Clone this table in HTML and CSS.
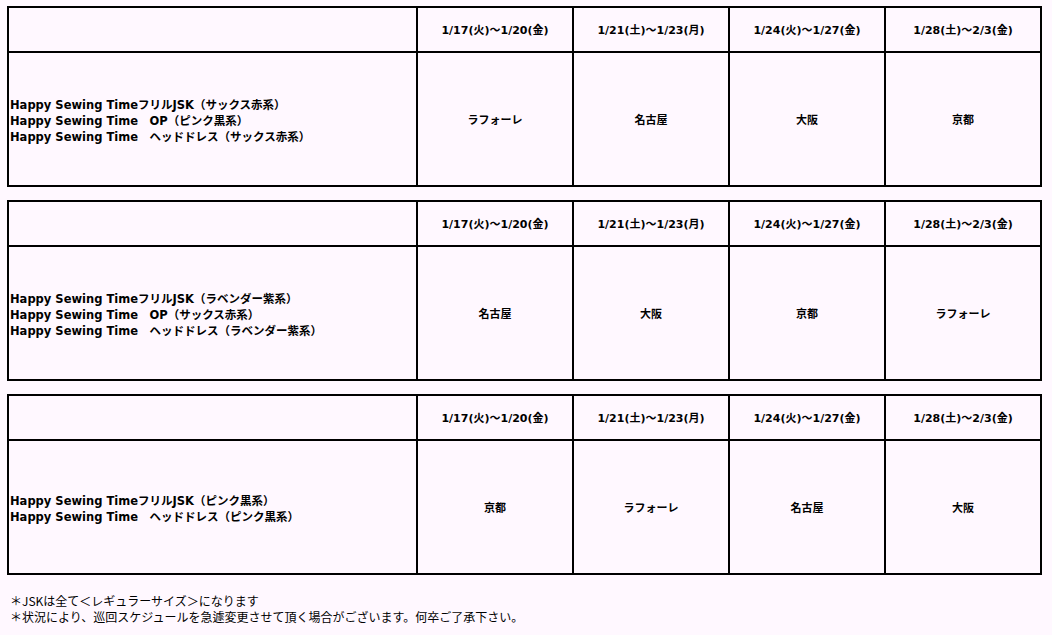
FILE: index.html
```html
<!DOCTYPE html>
<html lang="ja">
<head>
<meta charset="utf-8">
<title>巡回スケジュール</title>
<link rel="stylesheet" href="styles.css">
</head>
<body>
<div class="page">
  <table class="sched">
    <colgroup><col class="c-name"><col class="c-date"><col class="c-date"><col class="c-date"><col class="c-date"></colgroup>
    <tr class="head"><td></td><td>1/17(火)～1/20(金)</td><td>1/21(土)～1/23(月)</td><td>1/24(火)～1/27(金)</td><td>1/28(土)～2/3(金)</td></tr>
    <tr class="body">
      <td class="name">Happy Sewing TimeフリルJSK（サックス赤系）<br>Happy Sewing Time　OP（ピンク黒系）<br>Happy Sewing Time　ヘッドドレス（サックス赤系）</td>
      <td>ラフォーレ</td><td>名古屋</td><td>大阪</td><td>京都</td>
    </tr>
  </table>
  <table class="sched">
    <colgroup><col class="c-name"><col class="c-date"><col class="c-date"><col class="c-date"><col class="c-date"></colgroup>
    <tr class="head"><td></td><td>1/17(火)～1/20(金)</td><td>1/21(土)～1/23(月)</td><td>1/24(火)～1/27(金)</td><td>1/28(土)～2/3(金)</td></tr>
    <tr class="body">
      <td class="name">Happy Sewing TimeフリルJSK（ラベンダー紫系）<br>Happy Sewing Time　OP（サックス赤系）<br>Happy Sewing Time　ヘッドドレス（ラベンダー紫系）</td>
      <td>名古屋</td><td>大阪</td><td>京都</td><td>ラフォーレ</td>
    </tr>
  </table>
  <table class="sched">
    <colgroup><col class="c-name"><col class="c-date"><col class="c-date"><col class="c-date"><col class="c-date"></colgroup>
    <tr class="head"><td></td><td>1/17(火)～1/20(金)</td><td>1/21(土)～1/23(月)</td><td>1/24(火)～1/27(金)</td><td>1/28(土)～2/3(金)</td></tr>
    <tr class="body">
      <td class="name">Happy Sewing TimeフリルJSK（ピンク黒系）<br>Happy Sewing Time　ヘッドドレス（ピンク黒系）</td>
      <td>京都</td><td>ラフォーレ</td><td>名古屋</td><td>大阪</td>
    </tr>
  </table>
  <p class="note">＊JSKは全て＜レギュラーサイズ＞になります<br>＊状況により、巡回スケジュールを急遽変更させて頂く場合がございます。何卒ご了承下さい。</p>
</div>
</body>
</html>
```

FILE: styles.css
```css
html, body {
  margin: 0;
  padding: 0;
  background: #fff8ff;
}
.page {
  padding: 6px 0 0 7px;
  font-family: "DejaVu Sans", "Noto Sans CJK JP", sans-serif;
  color: #000;
}
.sched {
  width: 1035px;
  table-layout: fixed;
  border-collapse: separate;
  border-spacing: 0;
  border-top: 2px solid #000;
  border-left: 2px solid #000;
  margin-bottom: 13px;
}
.c-name { width: 409px; }
.c-date { width: 156px; }
.sched td {
  border-right: 2px solid #000;
  border-bottom: 2px solid #000;
  padding: 0 1px;
  text-align: center;
  vertical-align: middle;
  font-size: 11px;
  font-weight: bold;
  line-height: 16px;
  white-space: nowrap;
}
.head td { height: 41px; padding-top: 2px; }
.body td { height: 128px; padding-top: 4px; }
.sched td.name { text-align: left; font-size: 11.5px; }
.note {
  margin: 18px 0 0 3px;
  font-size: 12px;
  line-height: 16px;
  font-family: "Noto Sans CJK JP", sans-serif;
  color: #000;
}
```
